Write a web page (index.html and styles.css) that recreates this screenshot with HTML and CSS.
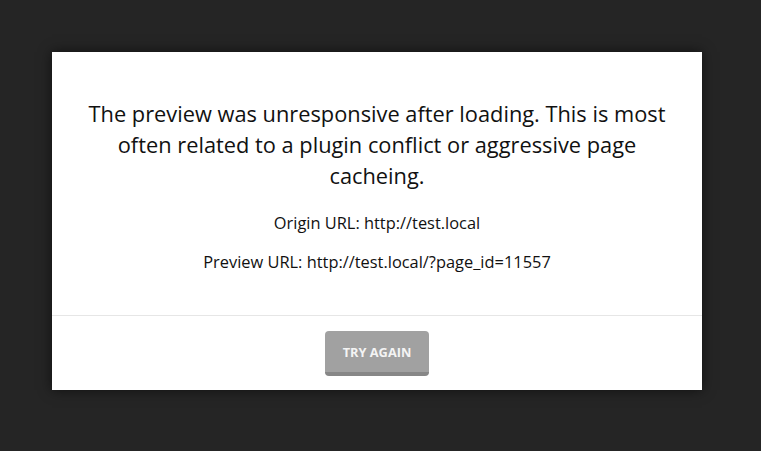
FILE: index.html
```html
<!DOCTYPE html>
<html lang="en">
<head>
    <meta charset="UTF-8" />
    <meta name="viewport" content="width=device-width, initial-scale=1.0" />
    <title>Preview Error</title>
    <link rel="stylesheet" href="styles.css">
</head>
<body>
    <div class="modal">
        <div class="modal-body">
            <h2>The preview was unresponsive after loading. This is most often related to a plugin conflict or aggressive page cacheing.</h2>
            <p class="url">Origin URL: http://test.local</p>
            <p class="url">Preview URL: http://test.local/?page_id=11557</p>
        </div>
        <div class="modal-footer">
            <button class="retry-btn">Try Again</button>
        </div>
    </div>
</body>
</html>
```

FILE: styles.css
```css
body {
    font-family: "Open Sans", Arial, sans-serif;
    margin: 0;
    height: 451px;
    background-color: #252525;
    padding: 52px;
    box-sizing: border-box;
}
.modal {
    background-color: #ffffff;
    width: 650px;
    height: 338px;
    box-shadow: 0 0 12px rgba(0, 0, 0, 0.6);
    display: flex;
    flex-direction: column;
}
.modal-body {
    padding: 46px 30px 0;
    text-align: center;
    height: 217px;
    border-bottom: 1px solid #e6e6e6;
}
h2 {
    margin: 0 0 20px;
    font-size: 21.8px;
    font-weight: 400;
    line-height: 31px;
    color: #111111;
}
.url {
    margin: 0 0 15px;
    font-size: 16.4px;
    line-height: 24px;
    color: #111111;
}
.modal-footer {
    display: flex;
    justify-content: center;
    padding-top: 15px;
}
.retry-btn {
    width: 104px;
    height: 45px;
    background-color: #a1a1a1;
    border: none;
    border-bottom: 4px solid #878787;
    border-radius: 4px;
    color: #f4f4f4;
    font-family: "Open Sans", Arial, sans-serif;
    font-size: 12.8px;
    font-weight: 700;
    text-transform: uppercase;
    padding: 0;
    cursor: pointer;
}
```
